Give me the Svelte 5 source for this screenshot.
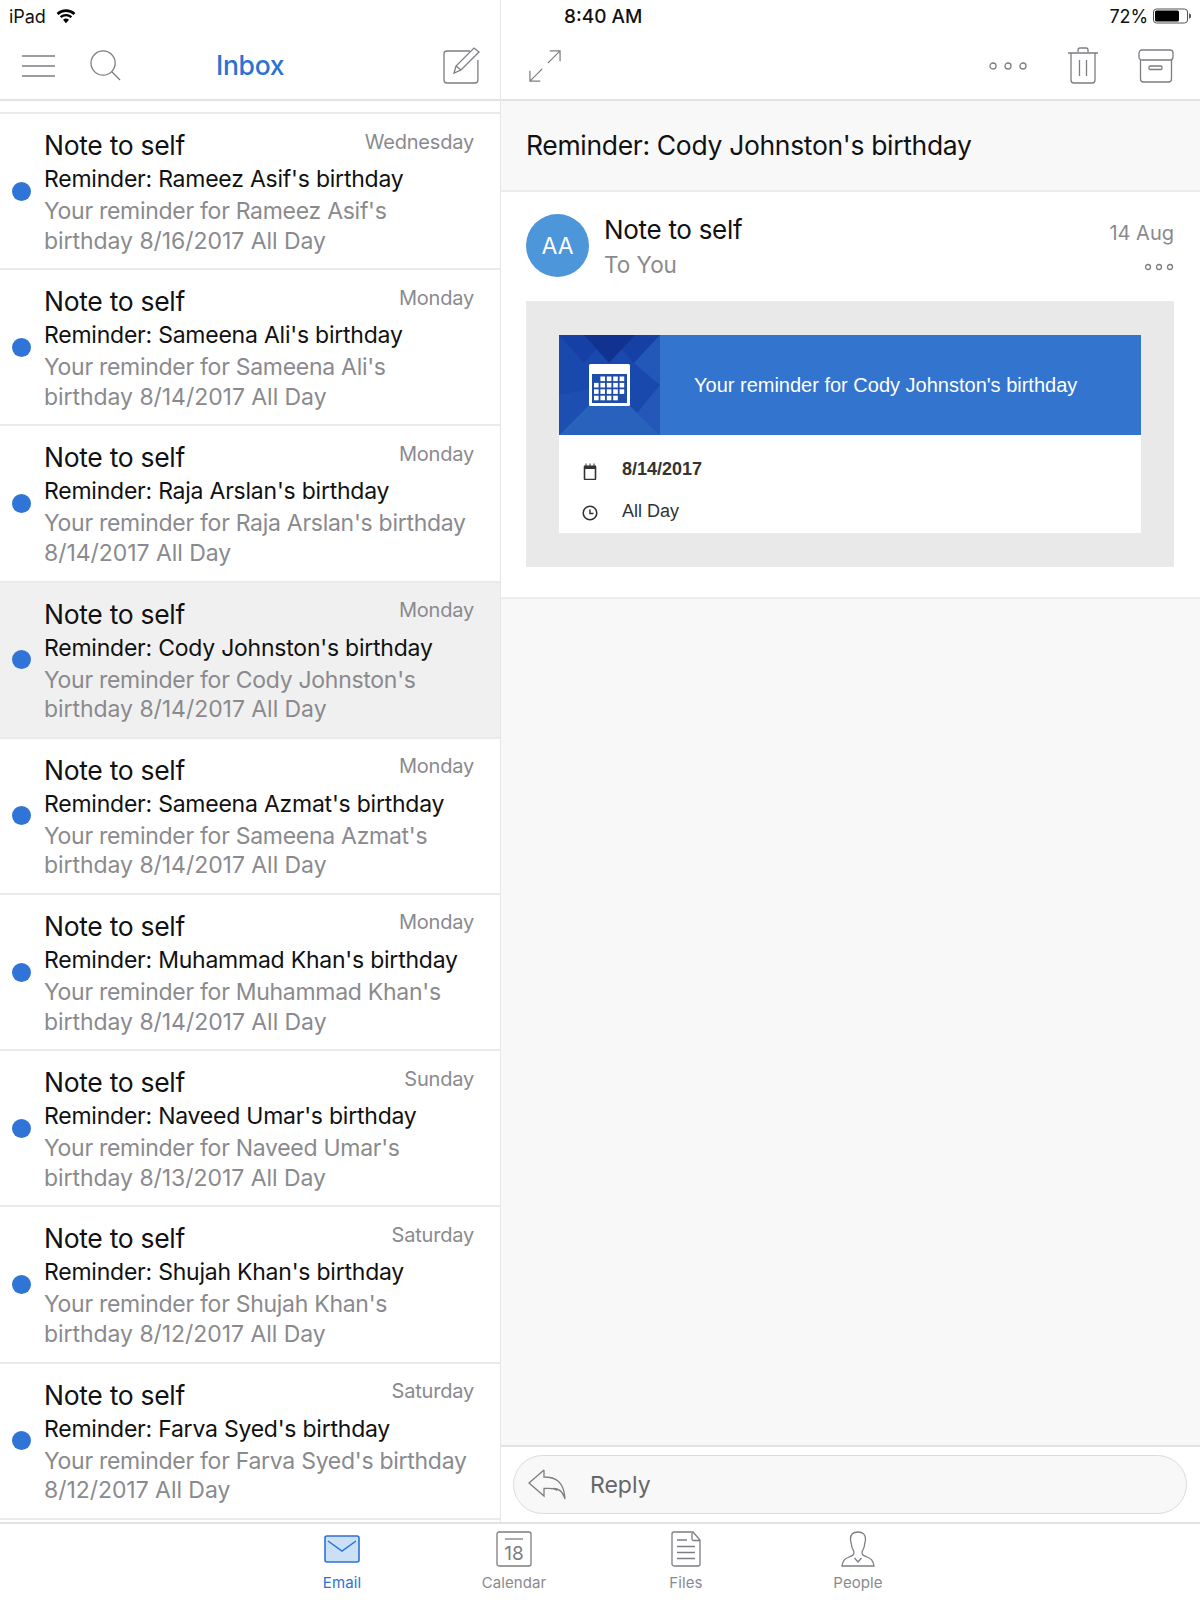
<script>
	const messages = [
		{ day: 'Wednesday', subject: "Reminder: Rameez Asif's birthday", line1: "Your reminder for Rameez Asif's", line2: 'birthday 8/16/2017 All Day' },
		{ day: 'Monday', subject: "Reminder: Sameena Ali's birthday", line1: "Your reminder for Sameena Ali's", line2: 'birthday 8/14/2017 All Day' },
		{ day: 'Monday', subject: "Reminder: Raja Arslan's birthday", line1: "Your reminder for Raja Arslan's birthday", line2: '8/14/2017 All Day' },
		{ day: 'Monday', subject: "Reminder: Cody Johnston's birthday", line1: "Your reminder for Cody Johnston's", line2: 'birthday 8/14/2017 All Day', selected: true },
		{ day: 'Monday', subject: "Reminder: Sameena Azmat's birthday", line1: "Your reminder for Sameena Azmat's", line2: 'birthday 8/14/2017 All Day' },
		{ day: 'Monday', subject: "Reminder: Muhammad Khan's birthday", line1: "Your reminder for Muhammad Khan's", line2: 'birthday 8/14/2017 All Day' },
		{ day: 'Sunday', subject: "Reminder: Naveed Umar's birthday", line1: "Your reminder for Naveed Umar's", line2: 'birthday 8/13/2017 All Day' },
		{ day: 'Saturday', subject: "Reminder: Shujah Khan's birthday", line1: "Your reminder for Shujah Khan's", line2: 'birthday 8/12/2017 All Day' },
		{ day: 'Saturday', subject: "Reminder: Farva Syed's birthday", line1: "Your reminder for Farva Syed's birthday", line2: '8/12/2017 All Day' }
	];
	// calendar cells in the reminder banner, [col, row]
	const cells = [];
	for (let r = 0; r < 4; r++) {
		for (let c = 0; c < 5; c++) {
			if ((r === 0 && c === 0) || (r === 3 && c === 4)) continue;
			cells.push([c, r]);
		}
	}
</script>

<div class="app">
	<div class="panes">
		<section class="list-pane">
			<div class="status">
				<span>iPad</span>
				<svg width="20" height="15" viewBox="0 0 20 15"><path d="M10 14.2 7 10.8a4.4 4.4 0 0 1 6 0zM5.4 9.1 3.8 7.3a9.2 9.2 0 0 1 12.4 0l-1.6 1.8a6.8 6.8 0 0 0-9.200 0zM2.400 5.900.6 4a13.800 13.800 0 0 1 18.800 0l-1.800 1.900a11.200 11.200 0 0 0-15.200 0z" fill="#000"/></svg>
			</div>
			<div class="toolbar">
				<svg class="ic menu" width="34" height="22" viewBox="0 0 34 22"><path d="M0 1h33M0 11h33M0 21h33"/></svg>
				<svg class="ic search" width="31" height="31" viewBox="0 0 32 32"><circle cx="13.500" cy="13.500" r="12.500"/><path d="m22.500 22.500 8.500 8.500"/></svg>
				<h1>Inbox</h1>
				<svg class="ic compose" width="37" height="37" viewBox="0 0 37 37"><path d="M27 4H4a3 3 0 0 0-3 3v26a3 3 0 0 0 3 3h28a3 3 0 0 0 2.900-3V13"/><path d="M11 26 13 19 31 1l5 4-18 18z M13 19l5 4"/></svg>
			</div>
			<div class="list">
				{#each messages as m}
					<article class="row" class:selected={m.selected}>
						<span class="dot"></span>
						<div class="body">
							<div class="top"><span class="from">Note to self</span><span class="day">{m.day}</span></div>
							<div class="subject">{m.subject}</div>
							<div class="preview">{m.line1}</div>
							<div class="preview">{m.line2}</div>
						</div>
					</article>
				{/each}
				<div class="list-end"></div>
			</div>
		</section>

		<section class="detail-pane">
			<div class="status right">
				<span class="time">8:40 AM</span>
				<span class="batt">72%</span>
				<svg width="39" height="16" viewBox="0 0 39 16"><rect x=".5" y="1" width="34" height="14" rx="3" fill="none" stroke="#555"/><rect x="2" y="2.500" width="24" height="11" rx="1.500" fill="#000"/><path d="M36 5.500c1.500 0 2 1 2 2.500s-.5 2.500-2 2.500z" fill="#555"/></svg>
			</div>
			<div class="toolbar tools">
				<svg class="ic" width="32" height="32" viewBox="0 0 34 34"><path d="M1 33 14 20M1 22v11h11M33 1 20 14M22 1h11v11"/></svg>
				<svg class="ic more" width="38" height="10" viewBox="0 0 38 10"><circle cx="4" cy="5" r="3"/><circle cx="19" cy="5" r="3"/><circle cx="34" cy="5" r="3"/></svg>
				<svg class="ic trash" width="30" height="37" viewBox="0 0 30 37"><path d="M0 6h30M10 5V3a2 2 0 0 1 2-2h6a2 2 0 0 1 2 2v2M3 6v27a3 3 0 0 0 3 3h18a3 3 0 0 0 3-3V6M11.500 13v16M18.500 13v16"/></svg>
				<svg class="ic archive" width="36" height="34" viewBox="0 0 36 34"><rect x="1" y="1" width="34" height="10" rx="3"/><path d="M2.500 11v19a3 3 0 0 0 3 3h25a3 3 0 0 0 3-3V11"/><rect x="11" y="17" width="13" height="3.500" rx="1"/></svg>
			</div>
			<div class="subject-bar">Reminder: Cody Johnston's birthday</div>
			<div class="message">
				<div class="sender">
					<div class="avatar">AA</div>
					<div class="who">
						<div class="name">Note to self</div>
						<div class="to">To You</div>
					</div>
					<div class="meta">
						<div class="date">14 Aug</div>
						<svg class="ic" width="30" height="8" viewBox="0 0 30 8"><circle cx="4" cy="4" r="2.500"/><circle cx="15" cy="4" r="2.500"/><circle cx="26" cy="4" r="2.500"/></svg>
					</div>
				</div>
				<div class="frame">
					<div class="card">
						<div class="banner">
							<svg width="101" height="100" viewBox="0 0 101 100" class="tile">
								<rect width="101" height="100" fill="#1a49ae"/>
								<path d="M0 0h50L25 28z" fill="#1740a4"/>
								<path d="M50 0h51L75 28z" fill="#1740a4"/>
								<path d="M25 0h51L50 28z" fill="#11338f"/>
								<path d="M101 0v100H60l41-50-26-22z" fill="#2358b8"/>
								<path d="M0 100l50-50 50 50z" fill="#2862bd"/>
								<path d="M50 50 0 100V60z" fill="#1d4fb2"/>
								<rect x="30" y="29" width="41" height="42" rx="1.500" fill="#fff"/>
								<rect x="33" y="39" width="35" height="29" fill="#1f4da9"/>
								{#each cells as [c, r]}
									<rect x={35 + c * 6.400} y={41.500 + r * 6.400} width="4.600" height="4.600" fill="#fff"/>
								{/each}
							</svg>
							<span>Your reminder for Cody Johnston's birthday</span>
						</div>
						<div class="fact bold">
							<svg width="14" height="17" viewBox="0 0 14 17"><path d="M1.500 4h11v11.500a1 1 0 0 1-1 1h-9a1 1 0 0 1-1-1z" fill="none" stroke="#333" stroke-width="1.600"/><path d="M1 2.500h12V6H1z" fill="#333"/><path d="M3 .5v3M7 .5v3M11 .5v3" stroke="#333"/></svg>
							<span>8/14/2017</span>
						</div>
						<div class="fact">
							<svg width="16" height="16" viewBox="0 0 16 16"><circle cx="8" cy="8" r="6.800" fill="none" stroke="#333" stroke-width="1.600"/><path d="M8 4.500V8.500h3.500" fill="none" stroke="#333" stroke-width="1.500"/></svg>
							<span>All Day</span>
						</div>
					</div>
				</div>
			</div>
			<div class="spacer"></div>
			<div class="reply-bar">
				<div class="reply">
					<svg class="ic" width="38" height="31" viewBox="0 0 38 31"><path d="M16 1 1 14l15 13v-7.500c6 0 9.500-1 13 2M16 1v7c11 0 20 4 21 22-3-9-7-10.500-12-10.500"/></svg>
					<span>Reply</span>
				</div>
			</div>
		</section>
	</div>

	<nav class="tabs">
		<div class="tab active">
			<svg width="36" height="28" viewBox="0 0 36 28"><rect x="1" y="1" width="34" height="26" rx="2" fill="#cbdff5" stroke="#2c72d6" stroke-width="1.600"/><path d="m4 6 14 10L32 6" fill="none" stroke="#2c72d6" stroke-width="1.500"/></svg>
			<span>Email</span>
		</div>
		<div class="tab">
			<svg class="ic" width="36" height="36" viewBox="0 0 36 36"><rect x="1" y="1" width="34" height="34" rx="2"/><path d="M9 8h18"/><text x="18" y="29" text-anchor="middle">18</text></svg>
			<span>Calendar</span>
		</div>
		<div class="tab">
			<svg class="ic" width="30" height="36" viewBox="0 0 30 36"><path d="M3 1h19l7 8v24a2 2 0 0 1-2 2H3a2 2 0 0 1-2-2V3a2 2 0 0 1 2-2zM21 2v6a1.500 1.500 0 0 0 1.500 1.500H29M6 9h10M6 15.500h18M6 21.500h18M6 27.500h18"/></svg>
			<span>Files</span>
		</div>
		<div class="tab">
			<svg class="ic" width="34" height="36" viewBox="0 0 34 36"><path d="M17 1c-5 0-7.500 3-7.500 7 0 3 1 4 1 6 0 3 2 5 2.500 7 0 3-1 3.500-5 5-4 1.500-6 3-7 9h32c-1-6-3-7.500-7-9-4-1.500-5-2-5-5 .5-2 2.500-4 2.500-7 0-2 1-3 1-6 0-4-2.500-7-7.500-7zM13.500 27l3.500 4 3.500-4"/></svg>
			<span>People</span>
		</div>
	</nav>
</div>

<style>
	:global(body) { margin: 0; background: #fff; }
	.app {
		width: 1200px;
		height: 1600px;
		display: flex;
		flex-direction: column;
		font-family: Inter, "Liberation Sans", sans-serif;
		color: #111;
		overflow: hidden;
	}
	.panes { display: flex; height: 1522px; }
	.ic { fill: none; stroke: #7d7d82; stroke-width: 1.300; flex: none; }

	/* list */
	.list-pane { width: 501px; box-sizing: border-box; flex: none; display: flex; flex-direction: column; border-right: 1px solid #e6e6e6; }
	.status { height: 32px; display: flex; align-items: center; gap: 9px; padding-left: 9px; font-size: 18px; letter-spacing: -0.1px; }
	.status svg:first-of-type { margin-left: 1px; }
	.toolbar {
		height: 67px;
		display: flex;
		align-items: center;
		border-bottom: 2px solid #e2e2e2;
	}
	.menu { margin-left: 22px; }
	.search { margin-left: 34px; }
	h1 { margin: 0 0 0 95px; font-size: 26.5px; line-height: 1; font-weight: 500; color: #2a72d4; letter-spacing: -0.3px; }
	.compose { margin-left: auto; margin-right: 20px; }
	.list { padding-top: 11px; flex: 1; overflow: hidden; }
	.row {
		height: 154.2px;
		border-top: 2px solid #eaeaea;
		display: flex;
		align-items: center;
	}
	.row.selected { background: #f0f0f0; }
	.list-end { border-top: 2px solid #eaeaea; }
	.dot { width: 19px; height: 19px; border-radius: 50%; background: #2f74d6; margin-left: 12px; flex: none; }
	.body { margin-left: 13px; width: 430px; margin-top: -1px; }
	.top { display: flex; justify-content: space-between; height: 40px; align-items: center; }
	.from { font-size: 26.5px; letter-spacing: -0.3px; }
	.day { font-size: 20px; color: #8a8a8e; margin-top: -7px; letter-spacing: -0.2px; }
	.subject { font-size: 23px; line-height: 29px; letter-spacing: -0.23px; margin-bottom: 3px; }
	.preview { font-size: 23px; line-height: 29.6px; color: #8a8a8e; letter-spacing: -0.28px; }
	.preview + .preview { letter-spacing: -0.05px; }

	/* detail */
	.detail-pane { flex: 1; display: flex; flex-direction: column; min-width: 0; }
	.status.right { gap: 0; padding: 0 8px 0 63px; font-size: 18px; }
	.time { font-weight: 500; font-size: 19px; letter-spacing: 0; }
	.batt { margin-left: auto; margin-right: 4px; }
	.tools { padding: 0 26px 0 28px; gap: 0; }
	.more { margin-left: auto; margin-right: 41px; }
	.trash { margin-right: 40px; }
	.subject-bar {
		height: 87px;
		padding: 0 0 2px 25px;
		background: #f8f8f8;
		border-bottom: 2px solid #ececec;
		display: flex;
		align-items: center;
		font-size: 26.5px;
		letter-spacing: -0.33px;
	}
	.message { background: #fff; border-bottom: 2px solid #ececec; padding: 0 26px 30px 25px; }
	.sender { display: flex; align-items: center; height: 107px; padding-bottom: 2px; }
	.avatar {
		width: 63px;
		height: 63px;
		border-radius: 50%;
		background: #4d96d9;
		color: #fff;
		display: flex;
		align-items: center;
		justify-content: center;
		font-size: 23px;
		flex: none;
	}
	.who { margin-left: 15px; margin-top: 3px; }
	.name { font-size: 26px; line-height: 35px; letter-spacing: -0.3px; }
	.to { font-size: 22.5px; line-height: 35px; color: #8a8a8e; }
	.meta { margin-left: auto; display: flex; flex-direction: column; align-items: flex-end; gap: 18px; }
	.date { font-size: 20px; color: #8a8a8e; }
	.frame { background: #e9e9e9; padding: 34px 33px 32px; height: 200px; }
	.card { background: #fff; height: 198px; }
	.banner {
		height: 100px;
		background: #3374ce;
		display: flex;
		align-items: center;
		color: #fff;
		font-family: "Liberation Sans", sans-serif;
		font-size: 20px;
	}
	.tile { flex: none; }
	.banner span { margin-left: 34px; }
	.fact {
		display: flex;
		align-items: center;
		height: 42px;
		padding-left: 23px;
		font-family: "Liberation Sans", sans-serif;
		font-size: 18px;
		color: #333;
	}
	.fact svg { width: 16px; margin-top: 2px; }
	.fact span { margin-left: 24px; margin-top: -2px; }
	.fact.bold { margin-top: 14px; font-weight: 700; }
	.spacer { flex: 1; background: #f8f8f8; }
	.reply-bar { height: 77px; border-top: 2px solid #e2e2e2; padding: 8px 13px 0 12px; box-sizing: border-box; background: #fff; }
	.reply {
		height: 59px;
		box-sizing: border-box;
		background: #f8f8f8;
		border: 1px solid #dcdcdc;
		border-radius: 30px;
		display: flex;
		align-items: center;
		padding-left: 14px;
		font-size: 23px;
		color: #66666a;
	}
	.reply span { margin-left: 24px; }

	/* tab bar */
	.tabs { height: 76px; border-top: 2px solid #e2e2e2; display: flex; padding-left: 256px; }
	.tab {
		width: 172px;
		display: flex;
		flex-direction: column;
		align-items: center;
		justify-content: flex-end;
		height: 68px;
		font-size: 15px;
		letter-spacing: 0.1px;
		color: #8a8a8e;
		gap: 6px;
	}
	.tab svg { height: 36px; }
	.tab.active { color: #2c72d6; }
	.tab text { font-family: Inter, sans-serif; font-size: 19px; stroke: none; fill: #7d7d82; }
</style>
